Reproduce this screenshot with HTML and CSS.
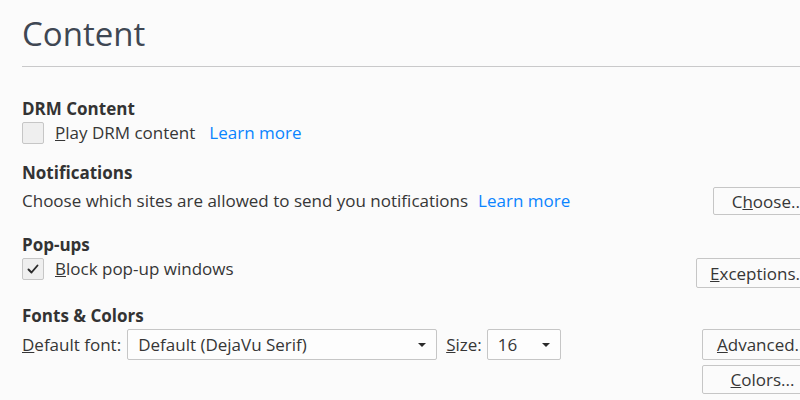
FILE: index.html
```html
<!DOCTYPE html>
<html lang="en">
<head>
<meta charset="utf-8">
<title>Content</title>
<link rel="stylesheet" href="styles.css">
</head>
<body>
<div class="page">
  <header class="header">
    <h1 class="title">Content</h1>
  </header>

  <section class="section first">
    <h2 class="section-title">DRM Content</h2>
    <div class="row">
      <label class="check">
        <span class="box"></span>
        <span class="check-text"><u>P</u>lay DRM content</span>
      </label>
      <a class="learn">Learn more</a>
    </div>
  </section>

  <section class="section">
    <h2 class="section-title">Notifications</h2>
    <div class="row row-center spread">
      <div class="row">
        <span class="text">Choose which sites are allowed to send you notifications</span>
        <a class="learn learn-tight">Learn more</a>
      </div>
      <button class="btn btn-choose">C<u>h</u>oose...</button>
    </div>
  </section>

  <section class="section">
    <h2 class="section-title">Pop-ups</h2>
    <div class="row spread row-top">
      <label class="check">
        <span class="box checked">
          <svg viewBox="0 0 22 22" width="22" height="22"><path d="M6.5 11.5 L9.5 14.5 L15.5 7.5" fill="none" stroke="#2a2a2a" stroke-width="1.9" stroke-linecap="round" stroke-linejoin="round"/></svg>
        </span>
        <span class="check-text"><u>B</u>lock pop-up windows</span>
      </label>
      <button class="btn btn-exc"><u>E</u>xceptions...</button>
    </div>
  </section>

  <section class="section">
    <h2 class="section-title">Fonts &amp; Colors</h2>
    <div class="row spread row-top">
      <div class="fonts">
        <span class="text"><u>D</u>efault font:</span>
        <div class="select select-font"><span>Default (DejaVu Serif)</span><span class="arrow"></span></div>
        <span class="text size-label"><u>S</u>ize:</span>
        <div class="select select-size"><span>16</span><span class="arrow"></span></div>
      </div>
      <div class="btn-col">
        <button class="btn"><u>A</u>dvanced...</button>
        <button class="btn"><u>C</u>olors...</button>
      </div>
    </div>
  </section>
</div>
</body>
</html>
```

FILE: styles.css
```css
html, body {
  margin: 0;
  padding: 0;
  overflow: hidden;
  background: #fbfbfb;
}

body {
  font-family: "Open Sans", "Noto Sans", sans-serif;
  font-size: 17px;
  color: #363636;
}

.page {
  width: 801px;
  padding-left: 22px;
}

.header {
  height: 67px;
  border-bottom: 1px solid #c9c9ca;
  box-sizing: border-box;
  padding-top: 14px;
}

.title {
  margin: 0;
  font-size: 33px;
  font-weight: 400;
  line-height: 40px;
  color: #3f4753;
}

.section {
  margin-top: 16px;
}

.section.first {
  margin-top: 30px;
}

.section-title {
  margin: 0;
  font-size: 17px;
  font-weight: 700;
  line-height: 24px;
  color: #333333;
}

.row {
  display: flex;
  align-items: center;
}

.row-center {
  height: 32px;
}

.row-top {
  align-items: flex-start;
}

.spread {
  justify-content: space-between;
}

.check {
  display: flex;
  align-items: center;
  height: 24px;
}

.box {
  width: 22px;
  height: 22px;
  box-sizing: border-box;
  border: 1px solid #c6c6c6;
  border-radius: 2px;
  background: #efefef;
  margin-right: 11px;
  display: flex;
}

.box svg {
  margin: -1px;
}

.text {
  line-height: 24px;
  white-space: nowrap;
}

.check-text {
  line-height: 24px;
}

.learn {
  color: #0a84ff;
  margin-left: 14px;
  line-height: 24px;
}

.learn-tight {
  margin-left: 10px;
}

.btn {
  font-family: inherit;
  font-size: 17px;
  color: #363636;
  background: #fbfbfb;
  border: 1px solid #c6c6c6;
  border-radius: 2px;
  padding: 0 13px;
  margin: 0;
  height: 29px;
  box-sizing: border-box;
  white-space: nowrap;
  text-align: center;
}

.btn-choose {
  min-width: 110px;
  height: 28px;
}

.btn-exc {
  height: 30px;
  margin-top: 1px;
}

.btn-col {
  display: flex;
  flex-direction: column;
  gap: 5px;
  margin-top: 1px;
  width: 121px;
}

.btn-col .btn:first-child {
  height: 31px;
}

.fonts {
  display: flex;
  align-items: center;
  margin-top: 1px;
}

.select {
  height: 31px;
  box-sizing: border-box;
  border: 1px solid #c6c6c6;
  border-radius: 2px;
  background: #fdfdfd;
  display: flex;
  align-items: center;
  justify-content: space-between;
  padding: 0 10px 0 10px;
}

.select-font {
  width: 310px;
  margin-left: 6px;
}

.select-size {
  width: 74px;
  margin-left: 5px;
}

.size-label {
  margin-left: 9px;
}

.arrow {
  width: 0;
  height: 0;
  border-left: 4px solid transparent;
  border-right: 4px solid transparent;
  border-top: 4px solid #2a2a2a;
}
```
